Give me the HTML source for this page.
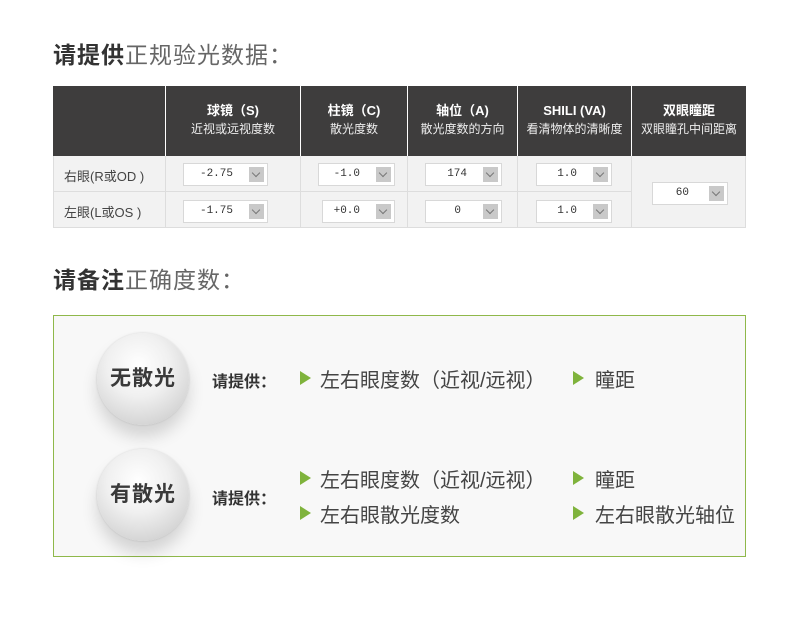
<!DOCTYPE html>
<html><head><meta charset="utf-8"><style>
*{margin:0;padding:0;box-sizing:border-box}
body{width:790px;height:622px;background:#fff;position:relative;overflow:hidden;font-family:"Liberation Sans","Noto Sans CJK SC",sans-serif;color:#333}
.a{position:absolute;white-space:nowrap}
.title{font-size:23px;color:#666;letter-spacing:1px}
.title b{color:#333;font-weight:bold}
.hd{position:absolute;top:86px;height:70px;background:#3e3d3d;color:#fff;text-align:center;border-left:1px solid #fff}
.hd b{display:block;font-size:13px;margin-top:16px;line-height:18px}
.hd span{display:block;font-size:12px;line-height:18px;color:#eee}
.cell{position:absolute;background:#f2f2f2;border-left:1px solid #ddd;border-bottom:1px solid #ddd}
.sel{position:absolute;height:23px;background:#fff;border:1px solid #d8d8d8;font-family:"Liberation Mono",monospace;font-size:11px;line-height:21px;color:#333}
.sel i{position:absolute;right:3px;top:3px;width:15px;height:15px;background:#c9c9c9}
.sel i:after{content:"";position:absolute;left:4px;top:3px;width:5px;height:5px;border-right:1px solid #777;border-bottom:1px solid #777;transform:rotate(45deg)}
.sel span{position:absolute;right:34px}
.ball{position:absolute;width:92px;height:92px;border-radius:50%;background:radial-gradient(circle at 45% 35%,#ffffff 0%,#f0f0f0 40%,#d6d6d6 75%,#b8b8b8 100%);box-shadow:0 12px 16px rgba(0,0,0,.15),0 0 2px rgba(0,0,0,.15);text-align:center;line-height:92px;font-size:21px;font-weight:bold;color:#3a3a3a;letter-spacing:1px}
.lbl{font-size:16px;font-weight:bold;color:#333}
.it{font-size:20px;color:#444}
.tri{position:absolute;width:0;height:0;border-left:11px solid #7fb33c;border-top:7px solid transparent;border-bottom:7px solid transparent}
</style></head><body>
<div class="a title" style="left:53px;top:36px"><b>请提供</b>正规验光数据：</div>

<div class="hd" style="left:53px;width:112px;border-left:none"></div>
<div class="hd" style="left:165px;width:135px"><b>球镜（S)</b><span>近视或远视度数</span></div>
<div class="hd" style="left:300px;width:107px"><b>柱镜（C)</b><span>散光度数</span></div>
<div class="hd" style="left:407px;width:110px"><b>轴位（A)</b><span>散光度数的方向</span></div>
<div class="hd" style="left:517px;width:114px"><b>SHILI (VA)</b><span>看清物体的清晰度</span></div>
<div class="hd" style="left:631px;width:115px"><b>双眼瞳距</b><span>双眼瞳孔中间距离</span></div>

<div class="cell" style="left:53px;top:156px;width:112px;height:36px;border-left:1px solid #ddd"></div>
<div class="cell" style="left:53px;top:192px;width:112px;height:36px;border-left:1px solid #ddd"></div>
<div class="cell" style="left:165px;top:156px;width:135px;height:36px"></div>
<div class="cell" style="left:165px;top:192px;width:135px;height:36px"></div>
<div class="cell" style="left:300px;top:156px;width:107px;height:36px"></div>
<div class="cell" style="left:300px;top:192px;width:107px;height:36px"></div>
<div class="cell" style="left:407px;top:156px;width:110px;height:36px"></div>
<div class="cell" style="left:407px;top:192px;width:110px;height:36px"></div>
<div class="cell" style="left:517px;top:156px;width:114px;height:36px"></div>
<div class="cell" style="left:517px;top:192px;width:114px;height:36px"></div>
<div class="cell" style="left:631px;top:156px;width:115px;height:72px;border-right:1px solid #ddd"></div>

<div class="a" style="left:64px;top:166px;font-size:13px;color:#444">右眼(R或OD )</div>
<div class="a" style="left:64px;top:202px;font-size:13px;color:#444">左眼(L或OS )</div>

<div class="sel" style="left:183px;top:163px;width:85px"><span>-2.75</span><i></i></div>
<div class="sel" style="left:183px;top:200px;width:85px"><span>-1.75</span><i></i></div>
<div class="sel" style="left:318px;top:163px;width:77px"><span>-1.0</span><i></i></div>
<div class="sel" style="left:322px;top:200px;width:73px"><span>+0.0</span><i></i></div>
<div class="sel" style="left:425px;top:163px;width:77px"><span>174</span><i></i></div>
<div class="sel" style="left:425px;top:200px;width:77px"><span style="right:40px">0</span><i></i></div>
<div class="sel" style="left:536px;top:163px;width:76px"><span>1.0</span><i></i></div>
<div class="sel" style="left:536px;top:200px;width:76px"><span>1.0</span><i></i></div>
<div class="sel" style="left:652px;top:182px;width:76px"><span style="right:38px">60</span><i></i></div>

<div class="a title" style="left:53px;top:261px"><b>请备注</b>正确度数：</div>

<div class="a" style="left:53px;top:315px;width:693px;height:242px;background:#f8f8f8;border:1px solid #8fb84a"></div>

<div class="ball" style="left:97px;top:333px">无散光</div>
<div class="ball" style="left:97px;top:449px">有散光</div>

<div class="a lbl" style="left:212px;top:368px">请提供：</div>
<div class="a lbl" style="left:212px;top:485px">请提供：</div>

<div class="tri" style="left:300px;top:371px"></div>
<div class="a it" style="left:320px;top:364px">左右眼度数（近视/远视）</div>
<div class="tri" style="left:573px;top:371px"></div>
<div class="a it" style="left:595px;top:364px">瞳距</div>

<div class="tri" style="left:300px;top:471px"></div>
<div class="a it" style="left:320px;top:464px">左右眼度数（近视/远视）</div>
<div class="tri" style="left:573px;top:471px"></div>
<div class="a it" style="left:595px;top:464px">瞳距</div>
<div class="tri" style="left:300px;top:506px"></div>
<div class="a it" style="left:320px;top:499px">左右眼散光度数</div>
<div class="tri" style="left:573px;top:506px"></div>
<div class="a it" style="left:595px;top:499px">左右眼散光轴位</div>
</body></html>
